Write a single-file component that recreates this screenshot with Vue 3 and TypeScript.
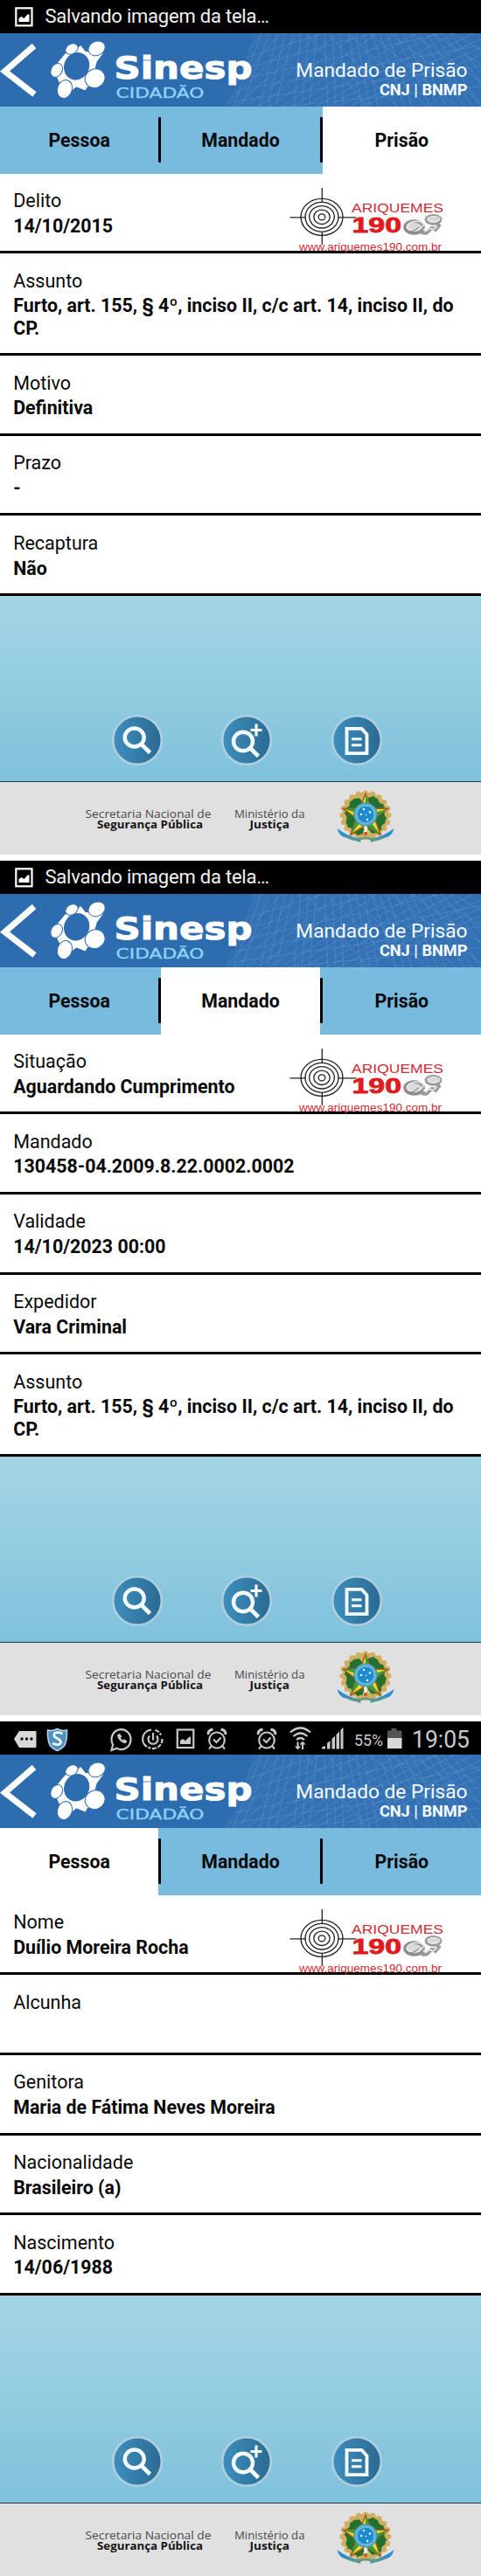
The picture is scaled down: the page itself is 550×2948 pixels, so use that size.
<script setup lang="ts">
interface Field {
  label: string
  value: string
}
interface Screen {
  id: string
  status: 'saving' | 'icons'
  active: string
  fields: Field[]
}

const tabs: string[] = ['Pessoa', 'Mandado', 'Prisão']
const offence = 'Furto, art. 155, § 4º, inciso II, c/c art. 14, inciso II, do CP.'

const screens: Screen[] = [
  {
    id: 's1',
    status: 'saving',
    active: 'Prisão',
    fields: [
      { label: 'Delito', value: '14/10/2015' },
      { label: 'Assunto', value: offence },
      { label: 'Motivo', value: 'Definitiva' },
      { label: 'Prazo', value: '-' },
      { label: 'Recaptura', value: 'Não' },
    ],
  },
  {
    id: 's2',
    status: 'saving',
    active: 'Mandado',
    fields: [
      { label: 'Situação', value: 'Aguardando Cumprimento' },
      { label: 'Mandado', value: '130458-04.2009.8.22.0002.0002' },
      { label: 'Validade', value: '14/10/2023 00:00' },
      { label: 'Expedidor', value: 'Vara Criminal' },
      { label: 'Assunto', value: offence },
    ],
  },
  {
    id: 's3',
    status: 'icons',
    active: 'Pessoa',
    fields: [
      { label: 'Nome', value: 'Duílio Moreira Rocha' },
      { label: 'Alcunha', value: '' },
      { label: 'Genitora', value: 'Maria de Fátima Neves Moreira' },
      { label: 'Nacionalidade', value: 'Brasileiro (a)' },
      { label: 'Nascimento', value: '14/06/1988' },
    ],
  },
]

// Header mesh: fans of thin lines
const meshA: string[] = Array.from({ length: 26 }, (_, i) => `M${290 + i * 9} 0L${258 + i * 13 - (i % 3) * 4} 84`)
const meshB: string[] = Array.from({ length: 15 }, (_, i) => `M${300 + i * 22} 0L${230 + i * 13} 84`)
const meshC: string[] = Array.from({ length: 9 }, (_, i) => `M${275 - i * 2} ${30 + i * 12}L560 ${-60 + i * 24}`)
const meshD: string[] = Array.from({ length: 8 }, (_, i) => `M${350 + i * 24} 0L${420 + i * 34} 84`)

const rimDots: { x: number; y: number }[] = Array.from({ length: 20 }, (_, i) => {
  const a = (i / 20) * Math.PI * 2
  return { x: 33 + Math.cos(a) * 26.5, y: 27.5 + Math.sin(a) * 25.5 }
})
const leafAngles: number[] = [-160, -125, -55, -20, 20, 160, 125, 55]
</script>

<template>
  <main class="sheet">
    <section v-for="s in screens" :key="s.id" class="screen">
      <div v-if="s.status === 'saving'" class="status">
        <svg class="pic" viewBox="0 0 21 23" width="21" height="23">
          <rect x="1.3" y="1.3" width="18.2" height="20" fill="none" stroke="#fff" stroke-width="2.2" />
          <path d="M4.500 17V13l3-2 3 2 4-4.500 2 0V17z" fill="#fff" />
        </svg>
        <span class="status-text">Salvando imagem da tela…</span>
      </div>
      <div v-else class="status">
        <svg class="tray" viewBox="0 0 550 38" width="550" height="38">
          <path d="M16 20l6-9h18.500q1 0 1 1v17q0 1-1 1H22z" fill="#d8d8d8" />
          <g fill="#111"><circle cx="25" cy="20" r="1.700" /><circle cx="30.500" cy="20" r="1.700" /><circle cx="36" cy="20" r="1.700" /></g>
          <path d="M65.500 8.500q-5.500 3-11 1.500-.5 12 3 18 3 3.500 8 5.500 5-2 8-5.500 3.500-6 3-18-5.500 1.500-11-1.500z" fill="#4f8fc0" stroke="#b9d6ea" stroke-width="1.500" />
          <path d="M71.500 14q-5-2.500-9-.5-2.500 3.500 3 6t3.500 6q-3.500 2.500-9-.5" fill="none" stroke="#eef6fb" stroke-width="2.800" />
          <g fill="none" stroke="#c9c9c9" stroke-width="2.200">
            <path d="M127.500 33l1.600-6.500a11 11.500 0 1 1 4.400 4.300z" />
            <path d="M134.500 15.500q0 3 2.700 6t6.300 3.200l1.500-2-3-2-1.500 1.200q-2-1-3-3.200l1.200-1.500-1.700-2.700z" fill="#c9c9c9" stroke-width="1" />
            <path d="M173 9.700A10.500 10.500 0 0 0 168 29" />
            <path d="M177.500 9.700a10.500 10.500 0 0 1 6.500 6M185.500 20a10.500 10.500 0 0 1-16 9.500" stroke-dasharray="5 1.500" />
            <path d="M171 16.500a5.500 5.500 0 1 0 8 0M175 13v8.500" />
            <rect x="202.800" y="9.500" width="18.500" height="20.500" />
            <path d="M206 26v-4l3-2 3 2 4.500-4.500h1.500V26z" fill="#c9c9c9" stroke="none" />
          </g>
          <g v-for="x in [248, 305]" :key="x" fill="none" stroke="#c9c9c9" stroke-width="2.100">
            <ellipse :cx="x" cy="21.500" rx="8.800" ry="9" />
            <path :d="`M${x - 4} 20.500l3.500 3.500 5-5.500`" />
            <path :d="`M${x - 9.500} 15q-1.500-4.500 5-6M${x + 9.500} 15q1.500-4.500-5-6`" stroke-width="3" />
            <path :d="`M${x - 6.500} 28.500l-2.500 3M${x + 6.500} 28.500l2.500 3`" />
          </g>
          <g fill="none" stroke="#c9c9c9" stroke-width="2.200">
            <path d="M332 12.500q11.500-10 23 0M335.500 17q8-7 16 0M339 21q4.500-4 9 0" />
            <path d="M340.500 23.500v6.500M346 32v-7.500" stroke-width="2" />
          </g>
          <path d="M337 28.500h7l-3.500 4zM342.500 26.500h7l-3.500-4z" fill="#c9c9c9" />
          <g fill="#c9c9c9"><path d="M368 31.500v-2l4-1.500v3.500zM374 31.500v-6.500l3.500-3v9.500zM379.500 31.500V20l3.500-3.500v15zM384.500 31.500V15l3.500-3.500v20zM389.500 31.500V9.500l3-2.500v24.500z" /></g>
          <text x="405" y="27.500" font-size="18" textLength="33" lengthAdjust="spacingAndGlyphs" fill="#c9c9c9">55%</text>
          <path d="M443 10.500h4.500V8h6v2.500h6V20H443z" fill="#555" /><rect x="443" y="19" width="16.500" height="12" fill="#d8d8d8" />
          <text x="471" y="30" font-size="27.500" textLength="66" lengthAdjust="spacingAndGlyphs" fill="#c9c9c9">19:05</text>
        </svg>
      </div>

      <header class="header">
        <svg class="mesh" viewBox="0 0 550 84" width="550" height="84">
          <defs>
            <clipPath :id="s.id + 'm'"><path d="M290 0H550V84H258Q275 50 290 0z" /></clipPath>
          </defs>
          <g :clip-path="`url(#${s.id}m)`" fill="none" stroke="#9cc4ea">
            <rect x="250" width="300" height="84" fill="#4a86c4" fill-opacity=".22" stroke="none" />
            <path v-for="d in meshA" :key="d" :d="d" stroke-opacity=".22" />
            <path v-for="d in meshB" :key="d" :d="d" stroke-opacity=".22" />
            <path v-for="d in meshC" :key="d" :d="d" stroke-opacity=".2" />
            <path v-for="d in meshD" :key="d" :d="d" stroke-opacity=".22" />
          </g>
          <path d="M39 14.500L5.500 43.500 39.500 70" fill="none" stroke="#fff" stroke-width="7" />
          <g transform="translate(0 -8.300) scale(.3333)">
            <path d="M200 128L226 96 262 88 276 70 292 90 352 92 330 122 322 150 340 200 298 206 292 218 262 206 242 222 204 190 196 172z" fill="#fff" stroke="#fff" stroke-width="5" stroke-linejoin="round" />
            <ellipse cx="263" cy="138" rx="43" ry="48" transform="rotate(25 263 138)" fill="#2e6cb0" />
            <g fill="#fff" stroke="#2e6cb0" stroke-width="3">
              <ellipse cx="246" cy="79" rx="23" ry="17" transform="rotate(-30 246 79)" />
              <ellipse cx="332" cy="77" rx="30" ry="24" transform="rotate(-25 332 77)" />
              <ellipse cx="194" cy="152" rx="19" ry="25" transform="rotate(30 194 152)" />
              <ellipse cx="222" cy="217" rx="25" ry="32" transform="rotate(20 222 217)" />
              <ellipse cx="326" cy="180" rx="35" ry="32" transform="rotate(-25 326 180)" />
            </g>
          </g>
          <text class="brand" x="130.500" y="52" textLength="158" lengthAdjust="spacingAndGlyphs">Sinesp</text>
          <text class="sub" x="132.500" y="74.300" textLength="101" lengthAdjust="spacingAndGlyphs">CIDADÃO</text>
        </svg>
        <div class="heading">
          <div class="title">Mandado de Prisão</div>
          <div class="source">CNJ | BNMP</div>
        </div>
      </header>

      <nav class="tabs">
        <template v-for="(t, i) in tabs" :key="t">
          <span v-if="i > 0" class="divider"></span>
          <span class="tab" :class="{ active: t === s.active }">{{ t }}</span>
        </template>
      </nav>

      <div class="fields">
        <div v-for="f in s.fields" :key="f.label" class="field">
          <div class="label">{{ f.label }}</div>
          <div class="value">{{ f.value }}</div>
        </div>
        <svg class="badge" viewBox="330 210 182 82" width="182" height="82">
          <g fill="none" stroke="#222" stroke-width="1.300">
            <ellipse cx="368" cy="248.300" rx="24" ry="21" />
            <ellipse cx="368" cy="248.300" rx="19" ry="17" />
            <ellipse cx="368" cy="248.300" rx="14.300" ry="12.700" />
            <ellipse cx="368" cy="248.300" rx="9.200" ry="8.200" />
            <ellipse cx="368" cy="248.300" rx="3.800" ry="3.500" />
            <path d="M368.300 215v16.500M368.300 265.500V280M331.500 248.800H350M386.500 248.800H407.500" />
          </g>
          <g fill="none">
            <ellipse cx="473.500" cy="260" rx="10.500" ry="7" fill="#dadada" stroke="#8d8d8d" stroke-width="3.500" />
            <ellipse cx="474.500" cy="258.500" rx="9.500" ry="5" stroke="#f0f0f0" stroke-width="1.500" transform="rotate(-10 474 258)" />
            <path d="M465 264q6 3 14-4" stroke="#8a8a8a" stroke-width="1.300" />
            <ellipse cx="495.500" cy="251.300" rx="8.500" ry="5" fill="#d8d8d8" stroke="#999" stroke-width="2.800" />
            <ellipse cx="496" cy="250.500" rx="7" ry="3" stroke="#f0f0f0" stroke-width="1.200" />
            <path d="M481 265q6 3.500 9-1t8-1.500l5-6" stroke="#9a9a9a" stroke-width="4.500" />
            <path d="M484 262l3 2.500 4-3.500 4 2 5-4" stroke="#eee" stroke-width="1.500" />
          </g>
          <g fill="#d22b35">
            <text class="ari" x="402" y="242.700" font-size="14.500" textLength="105" lengthAdjust="spacingAndGlyphs">ARIQUEMES</text>
            <text class="num" x="402.500" y="265.700" font-size="24.500" textLength="56.500" lengthAdjust="spacingAndGlyphs">190</text>
            <text class="ari" x="342" y="287" font-size="12.500" textLength="163" lengthAdjust="spacingAndGlyphs">www.ariquemes190.com.br</text>
          </g>
        </svg>
      </div>

      <div class="actions">
        <svg class="round" viewBox="-30 -30 60 60" width="60" height="60">
          <defs>
            <linearGradient :id="s.id + 'g'"><stop offset="0" stop-color="#3d8fbe" /><stop offset="1" stop-color="#2b6a92" /></linearGradient>
          </defs>
          <circle r="27.800" :fill="`url(#${s.id}g)`" stroke="#afcfdf" stroke-width="2.600" />
          <ellipse cx="-3.300" cy="-3" rx="11" ry="10.500" fill="none" stroke="#f3fbff" stroke-width="4.400" />
          <path d="M5 5l9.500 9.500" stroke="#f3fbff" stroke-width="4.600" />
        </svg>
        <svg class="round" viewBox="-30 -30 60 60" width="60" height="60">
          <circle r="27.800" :fill="`url(#${s.id}g)`" stroke="#afcfdf" stroke-width="2.600" />
          <ellipse cx="-4" cy="1.500" rx="11" ry="10.700" fill="none" stroke="#f3fbff" stroke-width="4.400" />
          <path d="M4.500 9.500l9 9" stroke="#f3fbff" stroke-width="4.600" />
          <path d="M11-18.500v14M4.500-11.500h13" stroke="#f3fbff" stroke-width="3.200" />
        </svg>
        <svg class="round" viewBox="-30 -30 60 60" width="60" height="60">
          <circle r="27.800" :fill="`url(#${s.id}g)`" stroke="#afcfdf" stroke-width="2.600" />
          <path d="M-11.500-13.200H5.500L11.500-6.500V15.200H-11.500z" fill="none" stroke="#f3fbff" stroke-width="3.800" />
          <path d="M-6-1.300H5.500M-6 5.700H5.500" stroke="#f3fbff" stroke-width="3" />
        </svg>
      </div>

      <footer class="footer">
        <svg class="credits" viewBox="90 0 370 82" width="370" height="82">
          <g class="gov">
            <text x="97.500" y="40.500" textLength="144" lengthAdjust="spacingAndGlyphs">Secretaria Nacional de</text>
            <text class="strong" x="111" y="52.700" textLength="121" lengthAdjust="spacingAndGlyphs">Segurança Pública</text>
            <text x="268" y="41" textLength="80.500" lengthAdjust="spacingAndGlyphs">Ministério da</text>
            <text class="strong" x="285.500" y="53.200" textLength="45.500" lengthAdjust="spacingAndGlyphs">Justiça</text>
          </g>
          <g transform="translate(385 10.500)">
            <g fill="#d3b065"><circle v-for="(p, i) in rimDots" :key="i" :cx="p.x" :cy="p.y" r="3" /></g>
            <circle cx="33" cy="27.500" r="26.500" fill="#cfae62" />
            <circle cx="33" cy="28" r="20.500" fill="#b9c67a" />
            <g v-for="(a, i) in leafAngles" :key="i" fill="#23702f" :transform="`rotate(${a} 33 28)`">
              <path d="M44 28q0-9 6-8 2-3 4 1 4 1 2 4 2 3-1 6-1 4-5 3-6 2-6-6z" />
            </g>
            <path d="M33 3l6.500 16.500 19 0.500-15 11 6.500 18.500L33 39 16 49.500l6.500-18.500-15-11 19-.5z" fill="#f2da2e" stroke="#a8571e" stroke-width="1.500" />
            <path d="M33 3v25l6.500-8.500zM58.500 20L33 28l10.500 3zM50 49.500L33 28v11zM16 49.500L33 28l-10.500 3zM7.500 20L33 28l-6.500-8.500z" fill="#3f9a3b" />
            <circle cx="33" cy="26.500" r="13.300" fill="#5eb1cf" stroke="#3b8f9c" stroke-width="1" />
            <circle cx="33" cy="26.500" r="9.800" fill="#1c8bd0" stroke="#bfe0ee" stroke-width=".8" stroke-dasharray="1.500 1" />
            <g fill="#fff"><circle cx="31" cy="20.500" r="1.200" /><circle cx="38" cy="24" r="1.200" /><circle cx="28" cy="26.500" r="1.200" /><circle cx="33.500" cy="27" r=".8" /><circle cx="35" cy="32.500" r="1.300" /></g>
            <path d="M31.500 40h3v9h-3z" fill="#fff" /><path d="M31.200 46.500h3.600v4h-3.600z" fill="#d2571f" />
            <path d="M.5 42.500q2 8 8 10l19 6-1-4.500q-14-2-26-11.500zM65.500 42.500q-2 8-8 10l-19 6 1-4.500q14-2 26-11.500z" fill="#2f8fcd" />
            <path d="M7 50q11 6 26 2 15 4 26-2-8 7-18 7l-8-3-8 3Q15 57 7 50z" fill="#5b9a86" />
          </g>
        </svg>
      </footer>
    </section>
  </main>
</template>

<style>
body {
  margin: 0;
  background: #fff;
}
</style>

<style scoped>
.sheet {
  width: 550px;
  display: flex;
  flex-direction: column;
  gap: 7px;
  font-family: Roboto, "Liberation Sans", sans-serif;
  color: #0a0a0a;
}
.screen {
  height: 978px;
  display: flex;
  flex-direction: column;
}
.status {
  height: 38.3px;
  flex: none;
  background: #000;
  color: #f2f2f2;
  display: flex;
  align-items: center;
}
.pic {
  margin-left: 17px;
}
.status-text {
  margin-left: 13.5px;
  font-size: 22px;
  letter-spacing: -0.22px;
  line-height: 38px;
  white-space: nowrap;
}
.tray {
  display: block;
}
.header {
  position: relative;
  height: 84px;
  flex: none;
  background: #2e6cb0;
  color: #f6fbff;
  display: flex;
  justify-content: flex-end;
}
.mesh {
  position: absolute;
  left: 0;
  top: 0;
}
.brand {
  font: bold 36px "DejaVu Sans", sans-serif;
  fill: #fff;
  stroke: #fff;
  stroke-width: 1px;
}
.sub {
  font: 16px "DejaVu Sans", sans-serif;
  fill: #8fd3fb;
  stroke: #8fd3fb;
  stroke-width: 0.3px;
}
.heading {
  position: relative;
  padding: 30px 15.5px 0 0;
  text-align: right;
  white-space: nowrap;
}
.title {
  font-size: 22.7px;
  line-height: 26px;
}
.source {
  font-size: 18.2px;
  font-weight: 700;
  line-height: 18px;
}
.tabs {
  height: 76.4px;
  flex: none;
  display: flex;
  align-items: center;
  background: #78bbdf;
}
.tab {
  flex: 1;
  height: 100%;
  display: flex;
  align-items: center;
  justify-content: center;
  font-size: 21.3px;
  font-weight: 700;
}
.tab.active {
  background: #fff;
}
.divider {
  width: 3px;
  height: 52px;
  background: #000;
  border-radius: 1px;
}
.fields {
  position: relative;
  background: #fff;
}
.field {
  box-sizing: border-box;
  min-height: 91.67px;
  padding: 18.4px 16px 16.3px 15.2px;
  border-bottom: 3px solid #000;
  font-size: 21.5px;
  line-height: 25.2px;
}
.value {
  font-size: 21.37px;
  font-weight: 700;
  margin-top: 3.5px;
}
.badge {
  position: absolute;
  left: 330px;
  top: 11.3px;
}
.actions {
  flex: 1;
  display: flex;
  align-items: flex-end;
  gap: 65.5px;
  padding: 0 0 17.5px 126.5px;
  border-bottom: 1.5px solid #1c3a4c;
  background: linear-gradient(#a4d4e4, #96cee1 40%, #7fc1dc);
}
.round {
  display: block;
}
.footer {
  height: 83px;
  flex: none;
  background: #e0e0e0;
  display: flex;
  justify-content: flex-start;
  padding-left: 90px;
}
.credits {
  display: block;
}
.gov {
  font: 12.5px "Open Sans", "Noto Sans", sans-serif;
  fill: #4a4a4a;
}
.strong {
  font-weight: 700;
  fill: #151515;
}
.ari {
  font-family: "Liberation Sans", sans-serif;
}
.num {
  font-family: "Liberation Sans", sans-serif;
  font-weight: 700;
  fill: #e01b20;
  stroke: #e01b20;
  stroke-width: 0.8px;
}
</style>
